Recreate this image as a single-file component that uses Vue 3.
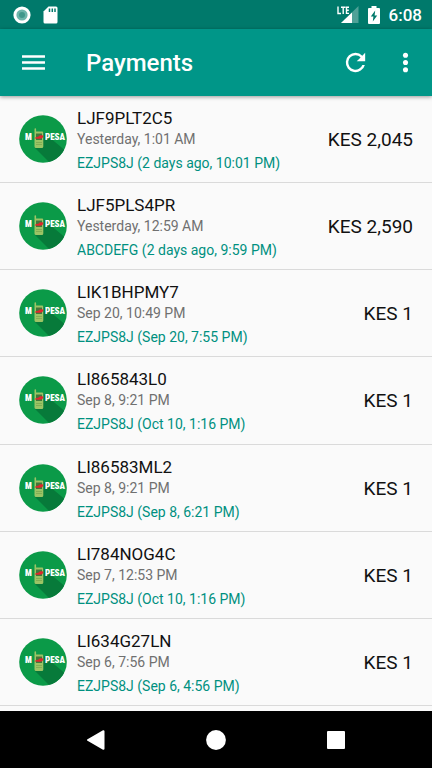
<script setup>
const payments = [
  { code: 'LJF9PLT2C5', date: 'Yesterday, 1:01 AM', account: 'EZJPS8J (2 days ago, 10:01 PM)', amount: 'KES 2,045' },
  { code: 'LJF5PLS4PR', date: 'Yesterday, 12:59 AM', account: 'ABCDEFG (2 days ago, 9:59 PM)', amount: 'KES 2,590' },
  { code: 'LIK1BHPMY7', date: 'Sep 20, 10:49 PM', account: 'EZJPS8J (Sep 20, 7:55 PM)', amount: 'KES 1' },
  { code: 'LI865843L0', date: 'Sep 8, 9:21 PM', account: 'EZJPS8J (Oct 10, 1:16 PM)', amount: 'KES 1' },
  { code: 'LI86583ML2', date: 'Sep 8, 9:21 PM', account: 'EZJPS8J (Sep 8, 6:21 PM)', amount: 'KES 1' },
  { code: 'LI784NOG4C', date: 'Sep 7, 12:53 PM', account: 'EZJPS8J (Oct 10, 1:16 PM)', amount: 'KES 1' },
  { code: 'LI634G27LN', date: 'Sep 6, 7:56 PM', account: 'EZJPS8J (Sep 6, 4:56 PM)', amount: 'KES 1' },
]
</script>

<template>
  <div class="screen">
    <div class="status">
      <svg width="18" height="18" viewBox="0 0 18 18">
        <circle cx="9" cy="9" r="8.6" fill="#fff" />
        <circle cx="9" cy="9" r="5.6" fill="#6db5ab" />
        <circle cx="9" cy="9" r="3" fill="#3f978b" />
      </svg>
      <svg class="sd" width="15" height="18" viewBox="0 0 15 18">
        <path fill="#fff" d="M5.500.5H13a1.500 1.500 0 0 1 1.500 1.500v14a1.500 1.500 0 0 1-1.500 1.500H2A1.500 1.500 0 0 1 .5 16V5.500z" />
        <path stroke="#00796b" stroke-width="1.500" d="M6.500 2.500v3.500M9.300 2.500v3.500M12 2.500v3.500" />
      </svg>
      <span class="grow"></span>
      <svg width="22" height="18" viewBox="0 0 22 18">
        <path fill="#4fa197" d="M21.500 0v17H4z" />
        <path fill="#fff" d="M15 6.500V17H4z" />
        <path fill="#00796b" d="M0 0h12v9H0z" />
        <path fill="none" stroke="#fff" stroke-width="1.400" d="M1 .5v7h3M4 1.200h4.500M6.200 1v7M12 1.200H9.500v6.200H12M9.500 4.300h2.300" />
      </svg>
      <svg class="battery" width="12" height="18" viewBox="0 0 12 18">
        <path fill="#fff" d="M3.500 0h5v2H11a1 1 0 0 1 1 1v14a1 1 0 0 1-1 1H1a1 1 0 0 1-1-1V3a1 1 0 0 1 1-1h2.500z" />
        <path fill="#00796b" d="M7.200 4.500 2.800 10.500h2.600L4.800 15.500 9.200 9.500H6.600z" />
      </svg>
      <span class="clock">6:08</span>
    </div>

    <header class="toolbar">
      <button type="button" aria-label="Open menu">
        <svg width="29" height="29" viewBox="0 0 24 24"><path fill="#fff" d="M2.500 18h19v-2h-19zm0-5h19v-2h-19zm0-7v2h19V6z" /></svg>
      </button>
      <h1>Payments</h1>
      <button type="button" aria-label="Refresh">
        <svg width="29" height="29" viewBox="0 0 24 24"><path fill="#fff" d="M17.650 6.350A7.960 7.960 0 0 0 12 4a8 8 0 1 0 7.730 10h-2.080A6 6 0 1 1 12 6c1.660 0 3.140.69 4.220 1.780L13 11h7V4z" /></svg>
      </button>
      <button class="more" type="button" aria-label="More options">
        <svg width="29" height="29" viewBox="0 0 24 24" fill="#fff"><circle cx="12" cy="6" r="2.100" /><circle cx="12" cy="12" r="2.100" /><circle cx="12" cy="18" r="2.100" /></svg>
      </button>
    </header>

    <ul class="list">
      <li v-for="p in payments" :key="p.code">
        <svg class="logo" width="48" height="48" viewBox="0 0 48 48">
          <defs>
            <clipPath id="disc"><circle cx="24" cy="24" r="23.800" /></clipPath>
          </defs>
          <g clip-path="url(#disc)">
            <path fill="#0b9a48" d="M0 0h48v48H0z" />
            <path fill="#077a3a" d="M24 17 48 37v11H31L15.500 32.500z" />
          </g>
          <path fill="#9cc465" d="M15.500 14a.8.8 0 0 1 1.600 0v2.500h6a1.200 1.200 0 0 1 1.200 1.200V31.500a1.500 1.500 0 0 1-1.500 1.500h-5.800a1.500 1.500 0 0 1-1.500-1.500z" />
          <path fill="#44763a" d="M17 18.500h6v6.500h-6z" />
          <path fill="#e0262c" d="M15.500 23.500c2-2.500 3.500-.8 5.500-3.300l3.500.3-1 2.500c-2.500 1.500-4.500 0-8 .5z" />
          <path stroke="#82ae55" stroke-width="1" d="M17 27.500h6M17 29.500h6" />
          <text x="6" y="25">M</text>
          <text x="26" y="25">PESA</text>
        </svg>
        <div class="details">
          <div class="code">{{ p.code }}</div>
          <div class="date">{{ p.date }}</div>
          <div class="account">{{ p.account }}</div>
        </div>
        <div class="amount">{{ p.amount }}</div>
      </li>
    </ul>

    <nav class="navbar">
      <button type="button" aria-label="Back">
        <svg width="20" height="20" viewBox="0 0 20 20"><path fill="#fff" stroke="#fff" stroke-width="2" stroke-linejoin="round" d="M17.500 1.200v17.600L2 10z" /></svg>
      </button>
      <button type="button" aria-label="Home">
        <svg width="20" height="20" viewBox="0 0 20 20"><circle cx="10" cy="10" r="9.900" fill="#fff" /></svg>
      </button>
      <button type="button" aria-label="Recent apps">
        <svg width="20" height="20" viewBox="0 0 20 20"><rect x="1" y="1" width="18" height="18" rx="1" fill="#fff" /></svg>
      </button>
    </nav>
  </div>
</template>

<style scoped>
.screen {
  display: flex;
  flex-direction: column;
  min-height: 100vh;
  background: #fafafa;
  font-family: Roboto, sans-serif;
}
button {
  display: flex;
  padding: 0;
  border: 0;
  background: none;
  cursor: pointer;
}
svg {
  display: block;
  flex: none;
}
.status {
  display: flex;
  align-items: center;
  height: 29px;
  padding: 0 10px 0 13px;
  background: #00796b;
}
.sd {
  margin-left: 12px;
}
.grow {
  flex: 1;
}
.battery {
  margin-left: 9px;
}
.clock {
  margin-left: 9px;
  color: #fff;
  font-size: 17px;
  font-weight: 500;
  line-height: 20px;
}
.toolbar {
  display: flex;
  align-items: center;
  height: 67px;
  padding: 0 12px 0 19px;
  background: #009688;
  box-shadow: 0 1px 4px rgba(0, 0, 0, 0.4);
}
h1 {
  flex: 1;
  margin: 0 0 0 38px;
  color: #fff;
  font-size: 24px;
  font-weight: 500;
  line-height: 28px;
}
.more {
  margin-left: 21px;
}
.list {
  display: flex;
  flex: 1;
  flex-direction: column;
  margin: 0;
  padding: 0 0 5px;
  list-style: none;
}
li {
  display: flex;
  flex: 1;
  align-items: center;
  padding: 0 19px;
  border-bottom: 1px solid #dadada;
}
.logo text {
  fill: #fff;
  font: 900 9px "Roboto Condensed", "Liberation Sans Narrow", sans-serif;
}
.details {
  flex: 1;
  margin-left: 10px;
  padding-top: 6px;
}
.code {
  color: #111;
  font-size: 17px;
  line-height: 20px;
}
.date {
  color: #707070;
  font-size: 14px;
  line-height: 22px;
}
.account {
  color: #009080;
  font-size: 14px;
  line-height: 26px;
}
.amount {
  padding-top: 2px;
  color: #111;
  font-size: 19px;
  line-height: 24px;
}
.navbar {
  display: flex;
  align-items: center;
  justify-content: center;
  gap: 100px;
  height: 57px;
  background: #000;
}
</style>

<style>
body {
  margin: 0;
}
</style>
